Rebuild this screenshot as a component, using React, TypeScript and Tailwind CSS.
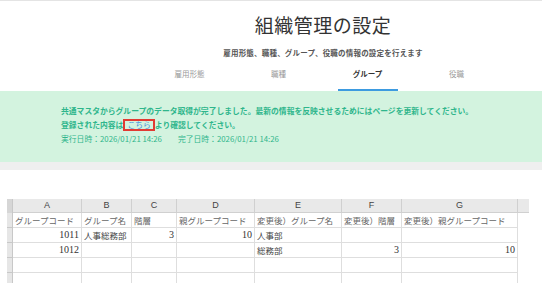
import React from 'react';

const TABS = ['雇用形態', '職種', 'グループ', '役職'];
const ACTIVE = 2;

const COLS = ['A', 'B', 'C', 'D', 'E', 'F', 'G'];

// r = right aligned number
type Cell = { t?: string; r?: boolean };
const ROWS: Cell[][] = [
  [
    { t: 'グループコード' },
    { t: 'グループ名' },
    { t: '階層' },
    { t: '親グループコード' },
    { t: '変更後）グループ名' },
    { t: '変更後）階層' },
    { t: '変更後）親グループコード' },
  ],
  [{ t: '1011', r: true }, { t: '人事総務部' }, { t: '3', r: true }, { t: '10', r: true }, { t: '人事部' }, {}, {}],
  [{ t: '1012', r: true }, {}, {}, {}, { t: '総務部' }, { t: '3', r: true }, { t: '10', r: true }],
  [{}, {}, {}, {}, {}, {}, {}],
  [{}, {}, {}, {}, {}, {}, {}],
];

function Sheet() {
  return (
    <div className="ml-[7px] grid grid-cols-[6px_69px_50px_45px_78px_87px_60px_116px_11px] text-[8.5px] text-[#444]">
      {/* column letters */}
      <div className="h-[14px] bg-[#d6d6d6] border-r border-[#c8c8c8]" />
      {COLS.map((c) => (
        <div
          key={c}
          className="h-[14px] bg-[#e9e9e9] border-r border-b border-[#d0d0d0] flex items-center justify-center font-['Liberation_Sans'] text-[9px] leading-none text-[#444]"
        >
          {c}
        </div>
      ))}
      <div className="h-[14px] bg-[#e9e9e9] border-b border-[#d0d0d0]" />

      {ROWS.map((row, ri) => (
        <React.Fragment key={ri}>
          <div className="h-[15px] bg-[#e6e6e6] border-r border-b border-[#c8c8c8]" />
          {row.map((cell, ci) => (
            <div
              key={ci}
              className={`h-[15px] border-r border-b border-[#dedede] flex items-center overflow-hidden whitespace-nowrap px-[2px] leading-none ${
                cell.r ? "justify-end font-['Liberation_Serif'] text-[10px] text-[#333]" : 'justify-start'
              } ${ri === 0 ? 'text-[#666]' : ''}`}
            >
              {cell.t}
            </div>
          ))}
          <div className="h-[15px]" />
        </React.Fragment>
      ))}
    </div>
  );
}

export default function App() {
  return (
    <div className="w-[548px] h-[283px] overflow-hidden bg-white font-['Noto_Sans_CJK_JP',sans-serif]">
      <div className="w-[542px]">
        <div className="h-px bg-[#e4e4e4]" />

        {/* header */}
        <div className="pl-[104px] flex flex-col items-center">
          <h1 className="mt-[12px] text-[19px] leading-[24px] text-[#333] tracking-[0.5px]">組織管理の設定</h1>
          <p className="mt-[10px] text-[7.5px] leading-[12px] text-[#555] font-bold tracking-[0.2px]">
            雇用形態、職種、グループ、役職の情報の設定を行えます
          </p>
          <div className="mt-[9px] flex">
            {TABS.map((t, i) => (
              <div key={t} className="w-[89px] flex flex-col items-center">
                <span
                  className={`text-[7.5px] leading-[12px] ${
                    i === ACTIVE ? 'text-[#333] font-bold' : 'text-[#9a9a9a]'
                  }`}
                >
                  {t}
                </span>
                <div className={`mt-[9px] h-[2px] w-[60px] ${i === ACTIVE ? 'bg-[#3d9be0]' : 'bg-transparent'}`} />
              </div>
            ))}
          </div>
        </div>

        {/* notice */}
        <div className="h-[71px] bg-[#d3f3df] pl-[61px] pt-[13px] text-[7.8px] leading-[14px] font-bold text-[#2fb68c]">
          <p>共通マスタからグループのデータ取得が完了しました。最新の情報を反映させるためにはページを更新してください。</p>
          <p className="flex items-center h-[14px]">
            登録された内容は
            <span className="inline-block border-2 border-[#e23a33] px-[2px] text-[#4a8fdc] font-normal leading-[8px]">
              こちら
            </span>
            より確認してください。
          </p>
          <p className="font-normal">
            実行日時：2026/01/21 14:26<span className="inline-block w-[16px]" />完了日時：2026/01/21 14:26
          </p>
        </div>
        <div className="h-[8px] bg-[#efefef]" />
      </div>

      <div className="mt-[29px]">
        <Sheet />
      </div>
    </div>
  );
}
